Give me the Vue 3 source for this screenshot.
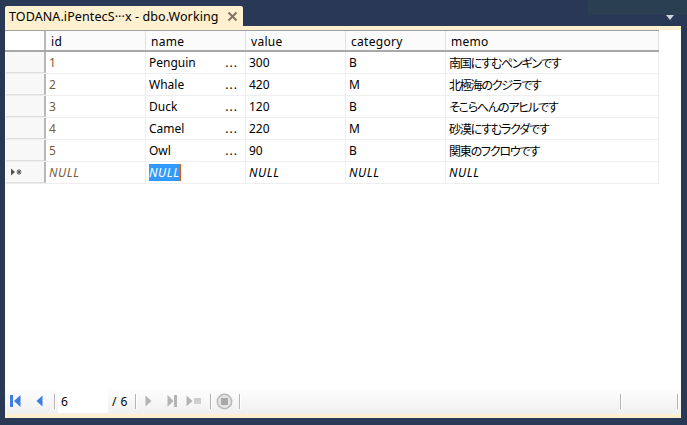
<template>
  <div class="window">
    <div class="tab-strip">
      <div class="tab">
        <span class="tab-title">TODANA.iPentecS···x - dbo.Working</span>
        <svg class="tab-close" width="11" height="11" viewBox="0 0 11 11">
          <path d="M1.5 1.5 L9.5 9.5 M9.5 1.5 L1.5 9.5" stroke="#7d7660" stroke-width="2" fill="none" />
        </svg>
      </div>
      <div class="tab-menu"></div>
    </div>

    <div class="panel">
      <div class="band"></div>
      <div class="sheet">
        <div class="grid">
          <div class="row head">
            <div class="rowhead"></div>
            <div v-for="col in columns" :key="col.key" class="cell" :class="col.key">{{ col.key }}</div>
          </div>
          <div v-for="row in rows" :key="row.id" class="row">
            <div class="rowhead"></div>
            <div class="cell id num">{{ row.id }}</div>
            <div class="cell name">
              <span>{{ row.name }}</span>
              <span class="more">...</span>
            </div>
            <div class="cell value">{{ row.value }}</div>
            <div class="cell category">{{ row.category }}</div>
            <div class="cell memo">{{ row.memo }}</div>
          </div>
          <div class="row new">
            <div class="rowhead">
              <svg width="14" height="8" viewBox="0 0 14 8">
                <path d="M1 0.5 L5 4 L1 7.5 Z" fill="#555" />
                <path d="M7 2 L11 6 M11 2 L7 6 M9 1 L9 7 M6.5 4 L11.5 4" stroke="#555" stroke-width="1" fill="none" />
              </svg>
            </div>
            <div class="cell id num null">NULL</div>
            <div class="cell name null"><span class="selected">NULL</span></div>
            <div class="cell value null">NULL</div>
            <div class="cell category null">NULL</div>
            <div class="cell memo null">NULL</div>
          </div>
        </div>
      </div>

      <div class="pager">
        <svg class="nav first" width="11" height="14" viewBox="0 0 11 14">
          <rect x="0" y="1" width="3" height="12" fill="#3f7de0" />
          <path d="M10.5 1 L10.5 13 L4 7 Z" fill="#3f7de0" />
        </svg>
        <svg class="nav prev" width="7" height="12" viewBox="0 0 7 12">
          <path d="M6.5 0.5 L6.5 11.5 L0.5 6 Z" fill="#3f7de0" />
        </svg>
        <span class="sep"></span>
        <div class="page-input">6</div>
        <span class="page-total">/ 6</span>
        <span class="sep"></span>
        <svg class="nav next" width="7" height="12" viewBox="0 0 7 12">
          <path d="M0.5 0.5 L0.5 11.5 L6.5 6 Z" fill="#b4b4b4" />
        </svg>
        <svg class="nav last" width="10" height="14" viewBox="0 0 10 14">
          <path d="M0.5 1 L0.5 13 L6.5 7 Z" fill="#b4b4b4" />
          <rect x="7" y="1" width="3" height="12" fill="#b4b4b4" />
        </svg>
        <svg class="nav add" width="16" height="12" viewBox="0 0 16 12">
          <path d="M0.5 0.5 L0.5 11.5 L6.5 6 Z" fill="#b4b4b4" />
          <rect x="8" y="3" width="7" height="6" fill="#cfcfcf" />
        </svg>
        <span class="sep"></span>
        <svg class="nav stop" width="17" height="17" viewBox="0 0 17 17">
          <circle cx="8.5" cy="8.5" r="7.2" fill="#e4e4e4" stroke="#b9b9b9" stroke-width="1.5" />
          <rect x="5" y="5" width="7" height="7" fill="#a8a8a8" />
        </svg>
        <span class="sep"></span>
        <span class="spacer"></span>
        <span class="sep"></span>
        <span class="gap-end"></span>
        <span class="sep"></span>
      </div>
      <div class="band"></div>
    </div>
  </div>
</template>

<script setup>
const columns = [
  { key: 'id' },
  { key: 'name' },
  { key: 'value' },
  { key: 'category' },
  { key: 'memo' }
]

const rows = [
  { id: 1, name: 'Penguin', value: 300, category: 'B', memo: '南国にすむペンギンです' },
  { id: 2, name: 'Whale', value: 420, category: 'M', memo: '北極海のクジラです' },
  { id: 3, name: 'Duck', value: 120, category: 'B', memo: 'そこらへんのアヒルです' },
  { id: 4, name: 'Camel', value: 220, category: 'M', memo: '砂漠にすむラクダです' },
  { id: 5, name: 'Owl', value: 90, category: 'B', memo: '関東のフクロウです' }
]
</script>

<style>
html,
body {
  margin: 0;
  background: #293955;
}
</style>

<style scoped>
.window {
  width: 687px;
  height: 425px;
  box-sizing: border-box;
  padding: 6px 6px 0 5px;
  background: linear-gradient(90deg, #293955 588px, #2a3f52 588px) no-repeat;
  background-size: 100% 15px;
  background-color: #293955;
  display: flex;
  flex-direction: column;
  font-family: "Noto Sans", "Noto Sans CJK JP", sans-serif;
  font-size: 12px;
  color: #000;
  overflow: hidden;
}

.tab-strip {
  height: 20px;
  flex-shrink: 0;
  display: flex;
  justify-content: space-between;
}

.tab {
  width: 238px;
  box-sizing: border-box;
  padding: 0 5px 0 4px;
  display: flex;
  align-items: center;
  justify-content: space-between;
  background: #fff0d0;
  border-radius: 2px 2px 0 0;
  white-space: nowrap;
}

.tab-title {
  font-size: 12.5px;
  letter-spacing: 0.1px;
}

.tab-menu {
  width: 0;
  height: 0;
  margin: 9px 7px 0 0;
  border-left: 4px solid transparent;
  border-right: 4px solid transparent;
  border-top: 5px solid #ced4df;
}

.panel {
  width: 676px;
  height: 392px;
  flex-shrink: 0;
  display: flex;
  flex-direction: column;
  background: #fff;
}

.band {
  height: 4px;
  flex-shrink: 0;
  background: #fff0d0;
}

.sheet {
  flex: 1;
  min-height: 0;
  background: #fff;
}

.grid {
  width: 654px;
  border-top: 1px solid #a0a0a0;
}

.row {
  display: flex;
  height: 22px;
  box-sizing: border-box;
  border-bottom: 1px solid #eeeeee;
}

.row.head {
  height: 21px;
  background: #fbfbfb;
  border-bottom: 2px solid #a8a8a8;
}

.rowhead {
  width: 40px;
  margin-left: 1px;
  flex-shrink: 0;
  box-sizing: border-box;
  display: flex;
  align-items: center;
  padding-left: 4px;
  background: #f8f8f8;
  border-right: 2px solid #b8b8b8;
  border-bottom: 1px solid #dedede;
}

.head .rowhead {
  background: #fff;
  border-bottom: none;
}

.cell {
  width: 100px;
  flex-shrink: 0;
  box-sizing: border-box;
  padding-left: 3px;
  display: flex;
  align-items: center;
  justify-content: space-between;
  border-right: 1px solid #eeeeee;
  white-space: nowrap;
}

.head .cell {
  padding: 1px 0 0 5px;
  border-right: 1px solid #e0e0e0;
  letter-spacing: 0.3px;
}

.cell.memo {
  width: 213px;
  font-feature-settings: "palt";
  letter-spacing: -1.2px;
}

.head .cell.memo {
  font-feature-settings: normal;
  letter-spacing: 0.3px;
}

.cell.null {
  font-style: italic;
  letter-spacing: 0.6px;
}

.cell.num {
  color: #7a5a3a;
}

.more {
  margin-right: 7px;
  letter-spacing: 1px;
}

.selected {
  background: #3399ff;
  color: #fff;
  padding-right: 1px;
  border-right: 1px solid #d06010;
}

.pager {
  height: 24px;
  flex-shrink: 0;
  box-sizing: border-box;
  padding: 0 0 2px 5px;
  display: flex;
  align-items: center;
  background: linear-gradient(#fdfdfd, #f0f0f0);
}

.nav {
  flex-shrink: 0;
}

.prev {
  margin-left: 15px;
}

.sep {
  width: 1px;
  height: 15px;
  flex-shrink: 0;
  background: #b4b4b4;
  box-shadow: 1px 0 0 #fff;
}

.prev + .sep {
  margin-left: 11px;
}

.page-input {
  width: 50px;
  height: 23px;
  margin-left: 3px;
  padding-left: 3px;
  box-sizing: border-box;
  display: flex;
  align-items: center;
  background: #fff;
}

.page-total {
  width: 23px;
  margin-left: 4px;
  flex-shrink: 0;
  letter-spacing: 0.5px;
}

.next {
  margin-left: 9px;
}

.last {
  margin-left: 15px;
}

.add {
  margin-left: 9px;
}

.add + .sep {
  margin-left: 8px;
}

.stop {
  margin-left: 5px;
}

.stop + .sep {
  margin-left: 6px;
}

.spacer {
  width: 380px;
  flex-shrink: 0;
}

.gap-end {
  width: 56px;
  flex-shrink: 0;
}
</style>
